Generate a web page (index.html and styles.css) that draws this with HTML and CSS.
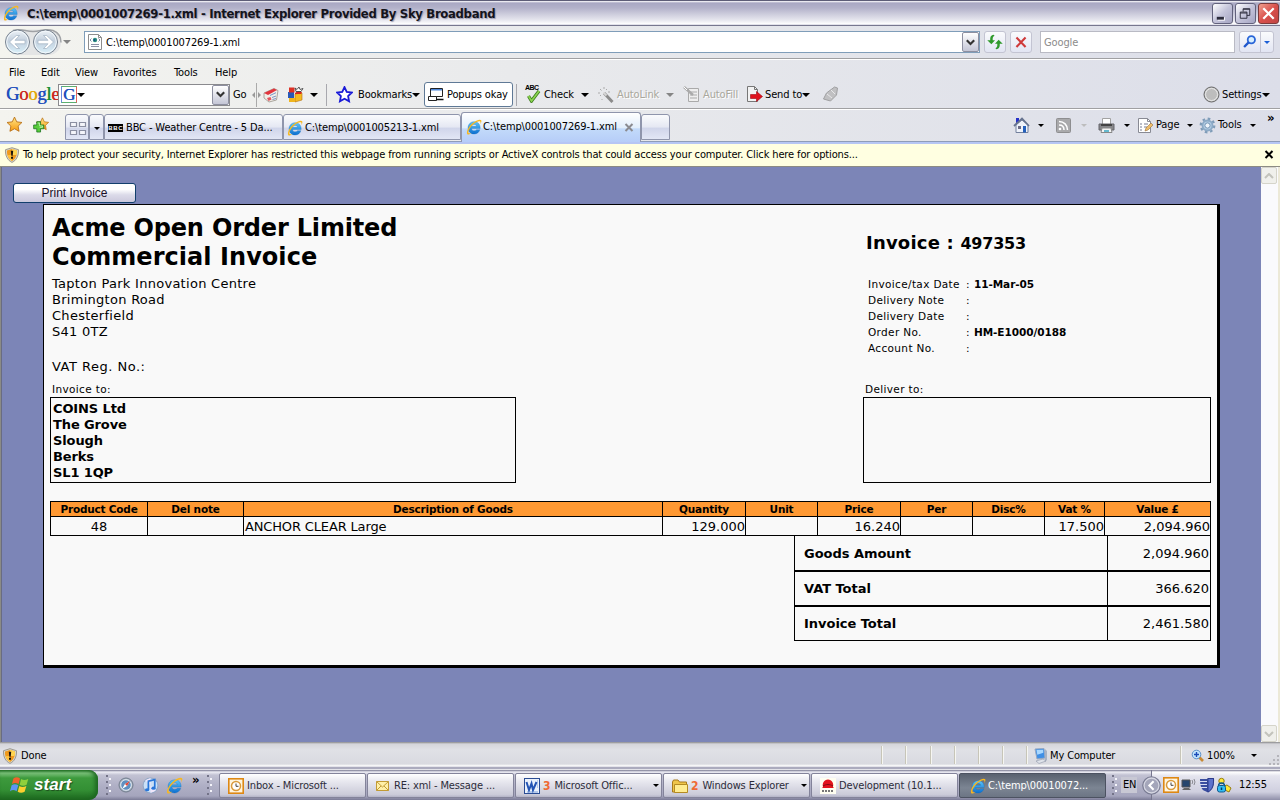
FILE: index.html
```html
<!DOCTYPE html>
<html lang="en">
<head>
<meta charset="utf-8">
<title>C:\temp\0001007269-1.xml</title>
<link rel="stylesheet" href="styles.css">
</head>
<body>
<svg class="defs" width="0" height="0">
  <defs>
    <linearGradient id="ieBlue" x1="0" y1="0" x2="0" y2="1"><stop offset="0" stop-color="#5cc4f8"/><stop offset="1" stop-color="#0c6fd0"/></linearGradient>
    <linearGradient id="orb" x1="0" y1="0" x2="0" y2="1"><stop offset="0" stop-color="#eef3f8"/><stop offset=".45" stop-color="#c3cfdd"/><stop offset="1" stop-color="#d9f1fb"/></linearGradient>
    <linearGradient id="goldStar" x1="0" y1="0" x2="0" y2="1"><stop offset="0" stop-color="#ffe98a"/><stop offset="1" stop-color="#f79a10"/></linearGradient>
    <symbol id="ie" viewBox="0 0 16 16">
      <path d="M14.200 9.500H5.500c.1 1.500 1.200 2.300 2.700 2.300 1.100 0 1.900-.4 2.300-1.100h3.400c-.9 2.700-3 4.300-5.700 4.300C4.600 15 2 12.400 2 8.900s2.500-6.200 6.200-6.200 6.200 2.600 6 6.800zM5.600 7.300h5c-.2-1.200-1.100-1.800-2.500-1.800S5.800 6.100 5.600 7.300z" fill="url(#ieBlue)" stroke="#0d68b8" stroke-width=".3"/>
      <path d="M1.300 15.200C0 13.700 2 8.300 6.100 4.600 10.300 1 14.300-.1 15.200 1.300c.5.900 0 2.400-1 4 .4-1.300.5-2.300 0-2.700-1.100-.8-4.400.5-7.600 3.400-3.500 3.400-4.900 7.200-3.900 8.100.6.500 1.900.2 3.300-.7-1.900 1.700-3.800 2.800-4.700 1.800z" fill="#f8b81f"/>
    </symbol>
    <symbol id="shield" viewBox="0 0 16 16">
      <path d="M8 .7l6.500 2C15 9 12 13.700 8 15.400 4 13.700 1 9 1.500 2.700z" fill="#d9d5c8" stroke="#8d897f" stroke-width=".8"/>
      <path d="M8 2l5 1.500c.4 4.700-1.800 8.800-5 10.400C4.800 12.300 2.600 8.200 3 3.500z" fill="#f09a1c"/>
      <path d="M8 2l5 1.500c.2 2-.1 3.400-.5 4.500H8z" fill="#ffd552"/><path d="M8 8H3.400c.8 3 2.500 5 4.600 5.900z" fill="#ffc23d"/>
      <path d="M6.800 3.800h2.400l-.5 5H7.300zM7 9.800h2v2H7z" fill="#1b130c"/>
    </symbol>
    <symbol id="star" viewBox="0 0 16 16"><path d="M8 1l2.100 4.500 4.900.6-3.600 3.400.9 4.900L8 12l-4.300 2.400.9-4.900L1 6.100l4.900-.6z"/></symbol>
    <symbol id="clock" viewBox="0 0 16 16"><rect x=".8" y=".8" width="14.400" height="14.400" fill="#fff5df" stroke="#dd8814" stroke-width="1.600"/><circle cx="8" cy="8" r="4.500" fill="#fff" stroke="#d99a3c" stroke-width="1.500"/><path d="M8 5.500V8.300h2.500" fill="none" stroke="#46423c"/></symbol>
  </defs>
</svg>

<header class="titlebar">
  <svg class="i16"><use href="#ie"/></svg>
  <h1 class="title">C:\temp\0001007269-1.xml - Internet Explorer Provided By Sky Broadband</h1>
  <div class="winbtns">
    <span class="winbtn"><svg viewBox="0 0 20 20"><path d="M5 14h7.500v3.500H5z" fill="#fff"/><path d="M4 13.500h7.500v3H4z" fill="#2c2c3c"/></svg></span>
    <span class="winbtn"><svg viewBox="0 0 20 20"><path d="M7.500 8V5h7v7h-3M4.500 8.500h7v6.500h-7zM4.500 9.500h7M7.500 5.500h7" fill="none" stroke="#2c2c3c"/></svg></span>
    <span class="winbtn close"><svg viewBox="0 0 20 20"><path d="M4.500 4.500l11 11M15.500 4.500l-11 11" stroke="#fff" stroke-width="2.400"/></svg></span>
  </div>
</header>

<div class="chrome">
<div class="nav">
  <svg class="arrows" viewBox="0 0 58 30">
    <path d="M13 2.500h31c9 0 13 5 13 12.500S52 28 44 28H13z" fill="#e4e5e6"/>
    <path d="M9 3.500c9-2.500 12 1 20 1s11-3.500 20-1c5 2 8 6 8 12" fill="none" stroke="#a0a2a6" stroke-width="1.400"/>
    <circle cx="13.500" cy="15" r="12" fill="url(#orb)" stroke="#77818e"/><circle cx="13.500" cy="15" r="10.800" fill="none" stroke="#f3f8fc"/>
    <circle cx="41.500" cy="15" r="12" fill="url(#orb)" stroke="#77818e"/><circle cx="41.500" cy="15" r="10.800" fill="none" stroke="#f3f8fc"/>
    <path d="M5.500 15l6.800-6.500h3.200L11 13.300h10v3.500H11l4.500 4.700h-3.200z" fill="#fff" stroke="#9fb0c1" stroke-width=".7"/>
    <path d="M49.500 15l-6.800-6.500h-3.200l4.500 4.800H34v3.500h10l-4.500 4.700h3.200z" fill="#fff" stroke="#9fb0c1" stroke-width=".7"/>
  </svg>
  <i class="dd grey"></i>
  <div class="address">
    <svg class="pageico" viewBox="0 0 16 16"><path d="M1.500.5h10l3 3v12h-13z" fill="#fff" stroke="#8d8d8d"/><path d="M11.500.5v3h3" fill="none" stroke="#8d8d8d"/><circle cx="8" cy="6" r="2.200" fill="#2f8f7c"/><circle cx="7.500" cy="6" r="1" fill="#124a8c"/><path d="M4.500 4.500L3 6l1.500 1.500M11.500 4.500L13 6l-1.500 1.500M4 10.500h8M4 12.500h8" fill="none" stroke="#8a8fa4"/></svg>
    <span>C:\temp\0001007269-1.xml</span>
    <b class="combo"><svg viewBox="0 0 8 6"><path d="M.7 1L4 4.300 7.300 1" fill="none" stroke="#333" stroke-width="1.900"/></svg></b>
  </div>
  <span class="navbtn"><svg viewBox="0 0 22 22"><path d="M9.500 3C6 3.500 5.600 6 5.800 9H2.500L7 13.500 11 9H8.500C8.300 6.500 8.500 5 10.500 4z" fill="#2f9a2c"/><path d="M12.500 19c3.500-.5 3.900-3 3.700-6h3.300L15 8.500 11 13h2.500c.2 2.500 0 4-2 5z" fill="#2f9a2c"/></svg></span>
  <span class="navbtn"><svg viewBox="0 0 22 22"><path d="M6 6l10 10.500M16 6L6 16.500" stroke="#cf3a3a" stroke-width="2.300"/></svg></span>
  <div class="search">Google</div>
  <span class="navbtn mag"><svg viewBox="0 0 22 22"><circle cx="12.500" cy="8.500" r="4" fill="#d7efff" stroke="#2a66d8" stroke-width="2"/><path d="M9.500 11.500l-5 5" stroke="#2058cc" stroke-width="2.600"/></svg><em><i class="dd blue"></i></em></span>
</div>

<nav class="menu"><span>File</span><span>Edit</span><span>View</span><span>Favorites</span><span>Tools</span><span>Help</span></nav>

<div class="gbar">
  <span class="glogo"><b class="gb">G</b><b class="gr">o</b><b class="gy">o</b><b class="gb">g</b><b class="gg">l</b><b class="gr">e</b></span>
  <div class="ginput"><span class="gbox">G</span><i class="dd"></i><b class="combo"><svg viewBox="0 0 8 6"><path d="M.7 1L4 4.300 7.300 1" fill="none" stroke="#333" stroke-width="1.900"/></svg></b></div>
  <span>Go</span>
  <svg width="9" height="24" viewBox="0 0 9 24"><path d="M4.500 0v24" stroke="#aaa"/><path d="M0 12l3-3v6zM9 12L6 9v6z" fill="#999"/></svg>
  <svg class="i16" viewBox="0 0 16 16"><path d="M1 6l10-4.500 4 2L13.500 13 6 15l-5-4z" fill="#f1eee8" stroke="#99938a" stroke-width=".8"/><path d="M1 6l10-4.500 3 1.500-9 5z" fill="#e2343d"/><path d="M4 11l3.500-1 1 2.500L5.500 14z" fill="#e2545d"/><path d="M7 8.500l6-2.800M9 10.500l4-1.500M9.500 12.500l3.500-1" stroke="#7b95c8"/></svg>
  <svg class="i17" viewBox="0 0 17 17"><path d="M1 6h6v6H1z" fill="#2858b7"/><path d="M8 8l7-1v7l-7 2z" fill="#f6ba20" stroke="#b16f12" stroke-width=".6"/><path d="M2 12h6v4H2z" fill="#efb51e"/><path d="M2 1.500h5.500v5H2z" fill="#dd3024"/><path d="M8 7l3-2 4 1-1 2H8z" fill="#d7261e"/><path d="M8 2l2 1.500L12 1l1 2.500 3-1-2 3H9z" fill="#fff" stroke="#333" stroke-width=".8"/></svg>
  <i class="dd"></i>
  <i class="sep"></i>
  <svg class="i17" viewBox="0 0 16 16" fill="#fff" stroke="#1a1ad8" stroke-width="1.700"><use href="#star"/></svg>
  <span class="lbl">Bookmarks<i class="dd"></i></span>
  <span class="popbtn"><svg class="i16" viewBox="0 0 16 16"><path d="M2.500 1.500h12v8h-12z" fill="#fff" stroke="#222"/><path d="M3 2h11v1.500H3z" fill="#4d86d8"/><path d="M.5 9.500h8v4h-8z" fill="#fff" stroke="#222"/><path d="M8 12.500h7.500" stroke="#111" stroke-width="1.500"/></svg>Popups okay</span>
  <i class="sep"></i>
  <span class="abc"><small>ABC</small><svg viewBox="0 0 14 13"><path d="M2 6l3 5L12.500 1" fill="none" stroke="#3f7c20" stroke-width="3.300"/><path d="M2 6l3 5L12.500 1" fill="none" stroke="#8bd650" stroke-width="1.600"/></svg></span>
  <span>Check</span><i class="dd"></i>
  <svg class="i16" viewBox="0 0 16 16"><path d="M6 6l8.500 9" stroke="#8b8b8b" stroke-width="3"/><path d="M5.500 5.500l3 3" stroke="#d7d7d7" stroke-width="2"/><path d="M2 2l1.500 1.500M6 0v2M9 2L8 3M0 6h2M2 9l1-1M11 4v2M4 12v1" stroke="#aaa"/></svg>
  <span class="off">AutoLink</span><i class="dd grey"></i>
  <svg class="i17" viewBox="0 0 17 17"><path d="M5.500 2.500h10v13h-10z" fill="#eee" stroke="#aaa"/><path d="M7 6h7M7 9h7M7 12h7" stroke="#aaa"/><path d="M1 1l9 8" stroke="#aaa" stroke-width="2.500"/><path d="M1 1l3 3" stroke="#fff"/></svg>
  <span class="off">AutoFill</span>
  <svg class="i17" viewBox="0 0 17 17"><path d="M1.500.5h7l3 3v12h-10z" fill="#f2f2f2" stroke="#777"/><path d="M8.500.5v3h3" fill="none" stroke="#777"/><path d="M4.500 8.500h6V5.500l6 5-6 5v-3h-6z" fill="#e0111c" stroke="#9c0910" stroke-width=".6"/></svg>
  <span class="lbl">Send to<i class="dd"></i></span>
  <svg class="i17" viewBox="0 0 17 17"><path d="M1.500 13l3-6 8-6 3 1-1 7-6 6z" fill="#c0c0c2" stroke="#a0a0a2"/><path d="M5 8l5 4M9 4l4 4" stroke="#e8e8ea"/></svg>
  <svg class="i17" viewBox="0 0 17 17"><circle cx="8.500" cy="8.500" r="7.500" fill="#c4c4c4" stroke="#676767"/><circle cx="8.500" cy="8.500" r="6" fill="#bdbdbd" stroke="#e8e8e8"/></svg>
  <span class="lbl">Settings<i class="dd"></i></span>
</div>

<div class="tabs">
  <svg class="fav" viewBox="0 0 16 16" fill="url(#goldStar)" stroke="#b66b12" stroke-width=".8"><use href="#star"/></svg>
  <svg class="fav" viewBox="0 0 18 16"><g fill="url(#goldStar)" stroke="#b66b12" stroke-width=".8"><use href="#star" x="2" width="16" height="15"/></g><path d="M4 5h4v3.500h3.500v4H8V16H4v-3.500H.7v-4H4z" fill="#58cc3c" stroke="#16701a" stroke-width=".8"/><path d="M5 6.500h2v3h3v1.500H7" fill="none" stroke="#d5f7c6" stroke-width=".8"/></svg>
  <div class="tab"><svg width="18" height="18" viewBox="0 0 18 18"><path d="M1.500 3.500h6v4h-6zM10.500 3.500h6v4h-6zM1.500 11.500h6v4h-6zM10.500 11.500h6v4h-6z" fill="#f4f5fa" stroke="#8b8fa2" stroke-width="1.200"/></svg></div>
  <div class="tab"><i class="dd sm"></i></div>
  <div class="tab"><span class="bbc"><b>B</b><b>B</b><b>C</b></span>BBC - Weather Centre - 5 Da...</div>
  <div class="tab t2"><svg class="i16"><use href="#ie"/></svg>C:\temp\0001005213-1.xml</div>
  <div class="tab on"><svg class="i16"><use href="#ie"/></svg>C:\temp\0001007269-1.xml<svg class="tx" viewBox="0 0 9 9"><path d="M1 1l7 7M8 1L1 8" stroke="#8b8b90" stroke-width="2"/></svg></div>
  <div class="tab"></div>
  <svg class="i17" viewBox="0 0 17 17"><path d="M3 1h3v5H3z" fill="#2530c8"/><path d="M3 8l6-5 6 5v7.500H3z" fill="#eef2fa" stroke="#73809c"/><path d="M1 9l8-7.500L16 9" fill="none" stroke="#66738f" stroke-width="1.800"/><path d="M10 9h3v6.500h-3z" fill="#2460bc"/><path d="M5 9h3v3H5z" fill="#6c6c85"/></svg>
  <i class="dd sm"></i>
  <svg class="i15" viewBox="0 0 15 15"><rect x=".5" y=".5" width="14" height="14" rx="1" fill="#a9a9ab" stroke="#8e8e90"/><circle cx="4" cy="11" r="1.300" fill="#fff"/><path d="M3 7c3 0 5 2 5 5M3 3.500c5 0 8.500 3.500 8.500 8.500" fill="none" stroke="#fff" stroke-width="1.500"/></svg>
  <i class="dd sm pale"></i>
  <svg class="i17" viewBox="0 0 17 17"><path d="M4.500 1.500h8v6h-8z" fill="#fff" stroke="#a2a2a2"/><path d="M1 7h15v6H1z" fill="#87878a" stroke="#65656a"/><path d="M3 7h11v2H3z" fill="#444"/><path d="M4 11h9l1 4.500H3z" fill="#f4f4f4" stroke="#888"/><path d="M6 13h5v2H6z" fill="#65b9cf"/></svg>
  <i class="dd sm"></i>
  <svg class="i17" viewBox="0 0 17 17"><path d="M1.500 1.500h9l3 3v11h-12z" fill="#fff" stroke="#888a94"/><path d="M10.500 1.500v3h3" fill="none" stroke="#888a94"/><path d="M3 7h2M7 7h4M3 10h2M7 10h3M3 13h2" stroke="#787d92"/><path d="M8 14l1-3 5-5 2 2-5 5z" fill="#efbd69" stroke="#98713a" stroke-width=".6"/></svg>
  <span>Page</span><i class="dd sm"></i>
  <svg class="i17" viewBox="0 0 17 17"><circle cx="8.500" cy="8.500" r="6.700" fill="none" stroke="#7f9cb8" stroke-width="2.400" stroke-dasharray="2.600 2.660"/><circle cx="8.500" cy="8.500" r="5" fill="#b2cce2" stroke="#8ba9c6" stroke-width="1.800"/><circle cx="8.500" cy="8.500" r="2.600" fill="#eef4fa" stroke="#7898b8"/></svg>
  <span>Tools</span><i class="dd sm"></i><span class="more">»</span>
</div>
</div>

<div class="infobar"><svg class="i16"><use href="#shield"/></svg><span>To help protect your security, Internet Explorer has restricted this webpage from running scripts or ActiveX controls that could access your computer. Click here for options...</span><svg class="ix" viewBox="0 0 9 9"><path d="M1 1l7 7M8 1L1 8" stroke="#000" stroke-width="2"/></svg></div>

<main class="view">
  <div class="page">
    <button class="print">Print Invoice</button>
    <article class="paper">
      <div class="top">
        <section class="seller">
          <h2><span>Acme Open Order Limited</span><br>Commercial Invoice</h2>
          <p>Tapton Park Innovation Centre<br>Brimington Road<br>Chesterfield<br>S41 0TZ</p>
          <p class="vat">VAT Reg. No.:</p>
        </section>
        <section class="info">
          <h3>Invoice : <span>497353</span></h3>
          <dl>
            <dt>Invoice/tax Date</dt><dd>: <b>11-Mar-05</b></dd>
            <dt>Delivery Note</dt><dd>:</dd>
            <dt>Delivery Date</dt><dd>:</dd>
            <dt>Order No.</dt><dd>: <b>HM-E1000/0188</b></dd>
            <dt>Account No.</dt><dd>:</dd>
          </dl>
        </section>
      </div>
      <div class="parties">
        <section><h4>Invoice to:</h4><div class="box">COINS Ltd<br>The Grove<br>Slough<br>Berks<br>SL1 1QP</div></section>
        <section><h4>Deliver to:</h4><div class="box"></div></section>
      </div>
      <div class="lines head"><span>Product Code</span><span>Del note</span><span>Description of Goods</span><span>Quantity</span><span>Unit</span><span>Price</span><span>Per</span><span>Disc%</span><span>Vat %</span><span>Value £</span></div>
      <div class="lines row"><span class="c">48</span><span></span><span class="l">ANCHOR CLEAR Large</span><span>129.000</span><span></span><span>16.240</span><span></span><span></span><span>17.500</span><span>2,094.960</span></div>
      <div class="totals">
        <div><b>Goods Amount</b><span>2,094.960</span></div>
        <div><b>VAT Total</b><span>366.620</span></div>
        <div><b>Invoice Total</b><span>2,461.580</span></div>
      </div>
    </article>
  </div>
  <div class="scroll">
    <span><svg viewBox="0 0 10 6"><path d="M1 5l4-4 4 4" fill="none" stroke="#c3c3bc" stroke-width="2"/></svg></span>
    <span><svg viewBox="0 0 10 6"><path d="M1 1l4 4 4-4" fill="none" stroke="#c3c3bc" stroke-width="2"/></svg></span>
  </div>
</main>

<footer class="status">
  <svg class="i16"><use href="#shield"/></svg><span>Done</span>
  <i class="v"></i><i class="v"></i><i class="v"></i><i class="v"></i><i class="v"></i><i class="v"></i><i class="v"></i>
  <svg class="i16" viewBox="0 0 16 16"><path d="M2 1l9-.5 1 9.500-8 1z" fill="#3f8fe5" stroke="#97a8c2"/><path d="M3.500 2l6.500-.3.300 3-6 2z" fill="#a9d8ff"/><path d="M12 1l2 2v9l-2 2z" fill="#aab3c3"/><path d="M3 13l7-2 3 2-7 2.500z" fill="#dfe3ea" stroke="#8d96a8" stroke-width=".6"/></svg>
  <span>My Computer</span>
  <i class="v"></i>
  <svg class="i13" viewBox="0 0 13 13"><path d="M8 8l4 4" stroke="#c88a34" stroke-width="2.600"/><circle cx="5.500" cy="5.500" r="4.300" fill="#c3e6fd" stroke="#5c90c8"/><path d="M5.500 3v5M3 5.500h5" stroke="#1a4bb8" stroke-width="1.400"/></svg>
  <span>100%</span><i class="dd sm"></i>
  <svg class="grip" viewBox="0 0 12 12"><path d="M9 1h2v2H9zM9 5h2v2H9zM9 9h2v2H9zM5 5h2v2H5zM5 9h2v2H5zM1 9h2v2H1z" fill="#b4b4ba"/></svg>
</footer>

<div class="taskbar">
  <div class="start"><svg viewBox="0 0 20 18"><path d="M4 3c2-1.500 4-1.500 6 0L8.700 8.200c-2-1.300-4-1.300-6 0z" fill="#f0622c"/><path d="M11 3.500c2 1.300 4 1.300 6.500 0L16 8.800c-2.300 1.300-4.300 1.200-6.300 0z" fill="#8fd03c"/><path d="M2.400 9.300c2-1.400 4-1.300 6 0l-1.500 5.300c-2-1.400-4-1.300-6 0z" fill="#5d95f3"/><path d="M9.400 9.800c2 1.300 4 1.300 6.400 0l-1.600 5.300c-2.300 1.300-4.300 1.200-6.300 0z" fill="#fccf2f"/></svg><b>start</b></div>
  <i class="dots"></i>
  <svg class="i16" viewBox="0 0 16 16"><circle cx="8" cy="8" r="7" fill="#a7b5c7" stroke="#727c8b"/><circle cx="8" cy="8" r="5.300" fill="#5f8fc0" stroke="#e7ecf1"/><path d="M12 4L9 9 4 12l3-5z" fill="#fff"/><path d="M12 4L9 9 7 7z" fill="#e34535"/></svg>
  <svg class="i17" viewBox="0 0 16 16"><circle cx="8" cy="8" r="7" fill="#cbe0f7" stroke="#91a7c6"/><path d="M3 3l5 5V1zM13 13L8 8v7z" fill="#f0e6fa"/><path d="M6 12V4l6-1.500V10" fill="none" stroke="#2976d9" stroke-width="1.600"/><ellipse cx="4.800" cy="12" rx="2" ry="1.500" fill="#2976d9"/><ellipse cx="10.800" cy="10.500" rx="2" ry="1.500" fill="#2976d9"/></svg>
  <svg class="i17" viewBox="0 0 16 16"><use href="#ie"/></svg>
  <span class="more">»</span>
  <i class="dots"></i>
  <div class="task"><svg class="i16"><use href="#clock"/></svg>Inbox - Microsoft ...</div>
  <div class="task mail"><svg viewBox="0 0 13 10"><path d="M.5.500h12v9H.5z" fill="#fff0a8" stroke="#c29b35"/><path d="M.5.500l6 5.500 6-5.500M.5 9.500L5 5M12.500 9.500L8 5" fill="none" stroke="#c29b35"/></svg>RE: xml - Message ...</div>
  <div class="task"><svg class="i16" viewBox="0 0 16 16"><rect x=".5" y=".5" width="15" height="15" fill="#eaf1fc" stroke="#2a4c94"/><path d="M13 3h1M13 5h1M13 7h1M13 9h1M3 14h11" stroke="#7fa0d8"/><path d="M2.500 4L5 12 7.500 5.500 9 12 12.500 4" fill="none" stroke="#2354b4" stroke-width="2"/></svg><b>3</b>Microsoft Offic...<i class="dd sm"></i></div>
  <div class="task"><svg class="i16" viewBox="0 0 16 16"><path d="M.5 4l1-2H6l1.500 2h7v10H.5z" fill="#efc54a" stroke="#a87a1b"/><path d="M2.500 6.500h13v8h-13z" fill="#ffec90" stroke="#b48a22"/></svg><b>2</b>Windows Explorer<i class="dd sm"></i></div>
  <div class="task"><svg class="i16" viewBox="0 0 16 16"><path d="M0 0h16v16H0z" fill="#fffef0"/><path d="M3 9c-1-4 1-7 5-7.500C12 2 14 5 13 9l1 1H2z" fill="#e3141c"/><path d="M3 8c3-2 7-2 10 0" stroke="#7f0c10" fill="none"/><path d="M2 13h12" stroke="#777" stroke-width="2" stroke-dasharray="2 1"/></svg>Development (10.1...</div>
  <div class="task cur"><svg class="i16"><use href="#ie"/></svg>C:\temp\00010072...</div>
  <i class="dots"></i>
  <span class="en">EN</span>
  <div class="tray">
    <svg class="orb" viewBox="0 0 18 18"><circle cx="9" cy="9" r="8.300" fill="#a4a6ba" stroke="#777990"/><circle cx="9" cy="9" r="7" fill="none" stroke="#d7d8e3"/><path d="M11 5L7 9l4 4" fill="none" stroke="#fff" stroke-width="2"/></svg>
    <svg class="i16"><use href="#clock"/></svg>
    <svg class="i16" viewBox="0 0 16 16"><path d="M1 3h8v7H1z" fill="#26466e" stroke="#555"/><path d="M3 11h5l2 2H1z" fill="#666"/><path d="M11 3q1.500 2 0 4M13 2q2 3 0 6" fill="none" stroke="#8a8a92"/></svg>
    <svg class="i16" viewBox="0 0 16 16"><path d="M1 2h7l1-1h6c.5 7-1 11.500-6 14.500L6 14C2.500 13 1 9 1 2z" fill="#3b4ea0"/><path d="M9 1.500h5.500c.3 7-1 11-5.500 13.500z" fill="#5c72cc" stroke="#2d3c8a"/><path d="M0 4.500h8M0 7.500h8M1 10.500h7" stroke="#d8dcf0"/></svg>
    <svg class="i16" viewBox="0 0 16 16"><circle cx="5.500" cy="4" r="2.700" fill="#ffe83a" stroke="#957d10"/><path d="M8 9l3-1 4 3-2 4-4-2z" fill="#ffe83a" stroke="#957d10"/><path d="M2.500 9c0-4 6-4 6 0" fill="none" stroke="#0d578d" stroke-width="1.400"/><rect x="1.500" y="8.500" width="8" height="6.500" rx="2" fill="#31bdf2" stroke="#0d578d"/><path d="M5.500 10.500v2.500" stroke="#063c66" stroke-width="1.500"/></svg>
    <span>12:55</span>
  </div>
</div>
</body>
</html>
```
FILE: styles.css
```css
* { box-sizing: border-box; }
html, body { margin: 0; height: 100%; }
body {
  width: 1280px; height: 800px; overflow: hidden;
  display: flex; flex-direction: column;
  font: 11px/16px "DejaVu Sans Condensed", "DejaVu Sans", sans-serif;
  font-stretch: condensed;
  letter-spacing: -.13px; color: #000; white-space: nowrap;
}
.defs { position: absolute; }
svg { display: block; flex: none; }
i, em { font-style: normal; }
.i16 { width: 16px; height: 16px; }
.i17 { width: 17px; height: 17px; }
.i15 { width: 15px; height: 15px; }
.i13 { width: 13px; height: 13px; }
.dd { display: block; flex: none; width: 0; height: 0; border: 4px solid transparent; border-top-color: #000; border-bottom: 0; }
.dd.sm { border-width: 3px 3px 0; }
.dd.grey { border-top-color: #858585; }
.dd.pale { border-top-color: #bdbdbd; }
.dd.blue { border-top-color: #1b5fd6; }

/* title bar */
.titlebar {
  height: 26px; display: flex; align-items: center; padding: 0 1px 0 3px;
  border-top: 1px solid #5d5d77; border-bottom: 1px solid #77778f;
  background: linear-gradient(#fff 0, #a9a8c3 2px, #b3b2ca 7px, #e6e6ee 19px, #fff 23px, #c5c5d6 24px);
}
.title { flex: 1; margin: 0 0 0 8px; padding-top: 1px; font-size: 13px; line-height: 20px; font-weight: bold; letter-spacing: -.34px; text-shadow: 1px 1px 1px #9a9ab0; color: #14141c; }
.winbtns { display: flex; gap: 2px; }
.winbtn { width: 21px; height: 21px; border: 1px solid #62627c; border-radius: 3px; background: linear-gradient(135deg, #fff, #c4c4da 50%, #a5a5c2); }
.winbtn svg { width: 19px; height: 19px; }
.close { border-color: #7c3a3a; background: linear-gradient(135deg, #f0a090, #d9504c 50%, #c04444); }

/* browser chrome */
.chrome { height: 118px; background: linear-gradient(90deg, #f4f4ef 0, #e9eaec 40%, #dcdee9 100%); }
.nav {
  height: 33px; display: grid; align-items: center; padding: 0 6px 0 4px;
  grid-template-columns: 59px 21px 900px 26px 30px 199px 35px;
  border-bottom: 1px solid #a0a0a2;
}
.arrows { width: 58px; height: 30px; }
.address { width: 896px; height: 22px; display: flex; align-items: center; border: 1px solid #7f9db9; background: #fff; padding-left: 2px; }
.address span { flex: 1; margin-left: 3px; padding-top: 1px; }
.pageico { width: 16px; height: 16px; }
.combo { width: 17px; height: 20px; border: 1px solid #8d8fa0; border-radius: 2px; background: linear-gradient(#fff, #c4c6d6); display: grid; place-items: center; }
.combo svg { width: 9px; height: 7px; }
.navbtn { width: 22px; height: 22px; border: 1px solid #c3c4d2; border-radius: 3px; background: linear-gradient(#fafbfd, #e2e5f3); display: flex; }
.navbtn svg { width: 20px; height: 20px; }
.mag { width: 35px; }
.mag em { flex: 1; display: grid; place-items: center; border-left: 1px solid #c3c4d2; }
.mag .dd { border-width: 3px 3px 0; }
.search { width: 195px; height: 22px; border: 1px solid #b9bac4; background: #fff; color: #8b8b8b; padding: 3px; line-height: 16px; }
.menu {
  height: 23px; display: grid; grid-template-columns: 32px 34px 38px 61px 41px 60px; align-items: center;
  padding: 3px 0 0 9px; border-top: 1px solid #fff;
}
.gbar {
  height: 27px; display: grid; align-items: center; padding: 0 0 3px 6px;
  grid-template-columns: 52px 175px 19px 11px 24px 23px 16px 10px 22px 66px 92px 9px 19px 37px 17px 19px 49px 17px 20px 43px 19px 57px 381px 19px 56px;
  border-bottom: 1px solid #a0a0a2;
}
.glogo { font: 18.500px/20px "Liberation Serif", serif; letter-spacing: -.2px; margin-top: -2px; }
.glogo b { font-weight: normal; text-shadow: .4px 0 0 currentColor; }
.gb { color: #2250bd; } .gr { color: #cb2a22; } .gy { color: #e3a80e; } .gg { color: #1b9137; }
.ginput { width: 172px; height: 22px; background: #fff; border: 1px solid #8a8a8e; display: flex; align-items: center; padding-left: 2px; }
.gbox { width: 16px; height: 17px; border: 1px solid #5cb070; border-left-color: #6b8be0; border-right-color: #e0655f; font: 17px/15px "Liberation Serif", serif; letter-spacing: 0; color: #2250bd; padding-left: 1px; text-shadow: .4px 0 0 currentColor; }
.ginput .combo { margin-left: auto; }
.sep { width: 1px; height: 22px; background: #a8a8ae; }
.lbl { display: flex; align-items: center; gap: 0; }
.off { color: #a9a79c; text-shadow: 1px 1px 0 #fff; }
.popbtn { width: 89px; height: 25px; display: flex; align-items: center; gap: 3px; padding-left: 3px; border: 1px solid #5f7996; border-radius: 3px; background: #fff; }
.abc { height: 22px; }
.abc small { display: block; font: bold 7px/7px "Liberation Sans", sans-serif; letter-spacing: -.5px; }
.abc svg { width: 15px; height: 13px; margin: -1px 0 0 1px; }

/* tab strip */
.tabs {
  height: 35px; display: grid; align-items: center; padding: 0 0 2px 6px;
  border-top: 1px solid #fff; border-bottom: 2px solid #b6c6f4;
  box-shadow: inset 0 -1px #8e9cb8;
  grid-template-columns: 27px 32px 24px 15px 179px 178px 180px 372px 25px 18px 25px 17px 26px 13px 19px 31px 12px 19px 32px 17px 11px;
}
.fav { width: 17px; height: 17px; margin-top: -2px; }
.tab {
  align-self: end; width: 100%; height: 26px; display: flex; align-items: center; padding: 2px 3px 0; gap: 2px; justify-self: start;
  border: 1px solid #8f95ac; border-radius: 3px 3px 0 0;
  background: linear-gradient(#fafbfd, #e5e8f3 50%, #d0d5ea 55%, #e2e6f5);
}
.tab:nth-child(8) { width: 29px; }
.tab:nth-child(4) { justify-content: center; }
.tab.on { height: 30px; margin-bottom: -2px; padding: 0 3px 1px 4px; background: linear-gradient(#fff, #e2eefb 50%, #c2dafa 55%, #b6cdf8); border-bottom: 0; }
.tab.on .i16 { margin-right: -1px; }
.tx { width: 10px; height: 9px; margin-left: 5px; }
.bbc { display: flex; gap: 0; margin-right: 1px; }
.bbc b { width: 5px; height: 8px; background: #000; color: #fff; font: bold 6px/8px "Liberation Sans", sans-serif; text-align: center; letter-spacing: 0; }
.more { font-weight: bold; font-size: 13px; align-self: start; }

/* information bar */
.infobar { height: 23px; display: flex; align-items: center; padding: 0 6px 1px 4px; background: #ffffe1; border-bottom: 1px solid #8c8b83; }
.infobar span { flex: 1; margin-left: 3px; padding-top: 1px; }
.ix { width: 10px; height: 9px; }

/* document view */
.view { height: 575px; display: flex; border-left: 1px solid #8b8b86; background: #7c85b7; }
.page { flex: 1; padding: 16px 0 0 11px; border-left: 1px solid #696c82; font: 13px/16px "DejaVu Sans", sans-serif; letter-spacing: 0; }
.print { display: block; width: 123px; height: 20px; border: 1px solid #123f6c; border-radius: 3px; background: linear-gradient(#fff 30%, #dcdbe9 60%, #cbc9dd); font: 12px/16px "Liberation Sans", sans-serif; color: #1a0f28; padding: 0; letter-spacing: 0; }
.paper { width: 1177px; height: 464px; margin: 1px 0 0 30px; padding: 9px 6px; border: solid #000; border-width: 1px 3px 3px 1px; background: #f9f9f9; }
.top { display: grid; grid-template-columns: 814px 1fr; height: 168px; }
.seller { padding-left: 2px; }
h2 { margin: 0; font-size: 24px; line-height: 29px; letter-spacing: .05px; }
h2 span { letter-spacing: -.18px; }
.seller p { margin: 4px 0 0; letter-spacing: .28px; }
.seller .vat { margin-top: 19px; letter-spacing: .5px; }
.info { padding-left: 2px; }
h3 { margin: 19px 0 22px; font-size: 18px; line-height: 20px; letter-spacing: .2px; }
h3 span { font-size: 16px; letter-spacing: -.2px; }
dl { margin: 0; padding-left: 2px; display: grid; grid-template-columns: 98px 1fr; font-size: 10.500px; line-height: 16px; }
dt { letter-spacing: .35px; }
dd { margin: 0; }
dd b { margin-left: 1px; letter-spacing: -.05px; }
.parties { display: grid; grid-template-columns: 466px 348px; justify-content: space-between; }
h4 { margin: 0 0 0 2px; font-weight: normal; font-size: 10.500px; line-height: 15px; letter-spacing: .35px; }
.box { height: 86px; border: 1px solid #000; padding: 3px 2px 0; font-weight: bold; letter-spacing: -.12px; }
.lines { display: grid; grid-template-columns: 97px 96px 419px 83px 72px 83px 72px 72px 60px 106px; width: 1161px; border-left: 1px solid #000; }
.lines span { border-right: 1px solid #000; border-bottom: 1px solid #000; text-align: center; }
.head { margin-top: 18px; border-top: 1px solid #000; background: #ff9933; font-weight: bold; font-size: 10.500px; line-height: 14px; letter-spacing: -.2px; }
.row { line-height: 18px; height: 19px; }
.row span { height: 19px; padding-top: 1px; text-align: right; }
.row .c { text-align: center; }
.row .l { text-align: left; padding-left: 1px; letter-spacing: -.15px; }
.totals { width: 417px; margin: 0 0 0 auto; border: solid #000; border-width: 0 1px; }
.totals div { display: grid; grid-template-columns: 1fr 103px; height: 35px; line-height: 34px; border-bottom: 2px solid #000; }
.totals div:first-child { height: 36px; line-height: 36px; }
.totals div:last-child { height: 34px; border-bottom-width: 1px; }
.totals b { padding-left: 9px; letter-spacing: -.03px; }
.totals span { border-left: 1px solid #000; text-align: right; padding-right: 1px; }
.lines span:first-child { margin-left: -1px; border-left: 1px solid #000; }
.scroll { width: 19px; border-right: 2px solid #ece9d8; background: #fafafd; display: flex; flex-direction: column; justify-content: space-between; }
.scroll span { width: 16px; height: 17px; display: grid; place-items: center; border: 1px solid #d5d4ca; border-radius: 2px; background: #f0f0ec; }
.scroll svg { width: 10px; height: 6px; }

/* status bar */
.status {
  height: 28px; display: grid; align-items: center; padding: 0 0 1px 2px;
  grid-template-columns: 19px 860px 24px 25px 24px 24px 24px 24px 7px 17px 130px 11px 16px 44px 17px 12px;
  background: linear-gradient(#8a8a8c 0, #d5d5da 2px, #e0e1e6 8px, #d9dae0 22px, #fff 24px, #8f8fa8 26px, #fff 28px);
}
.status > span { padding-top: 1px; }
.v { width: 2px; height: 18px; margin-top: -2px; background: #c7c5b8; border-right: 1px solid #f6f6f2; }
.grip { width: 12px; height: 12px; align-self: end; margin-bottom: 3px; }

/* taskbar */
.taskbar {
  height: 30px; display: grid; align-items: center;
  grid-template-columns: 106px 12px 24px 24px 26px 15px 12px 148px 148px 148px 148px 148px 153px 10px 29px 129px;
  background: linear-gradient(#77778f 0, #ededf4 2px, #c2c2d3 5px, #b0b0c6 50%, #a5a5bd 26px, #7b7b96 30px);
}
.start { width: 98px; height: 30px; display: flex; align-items: center; border-radius: 0 9px 9px 0; background: linear-gradient(#2a7a2c, #7cc27b 3px, #3d9a3d 8px, #338f34 20px, #1c661e); box-shadow: inset -3px 0 4px #1d6720; }
.start svg { width: 22px; height: 20px; margin-left: 9px; }
.start b { font: italic bold 17px/26px "Liberation Sans", sans-serif; color: #fff; text-shadow: 1px 1px 1px #1d4d1d; margin-left: 3px; letter-spacing: .1px; }
.dots { width: 6px; height: 20px; background: radial-gradient(circle at 1px 1px, #737388 1px, transparent 1.300px) 0 0 / 6px 6px, radial-gradient(circle at 4px 4px, #f4f4fa 1px, transparent 1.300px) 0 0 / 6px 6px; }
.taskbar .more { align-self: start; margin-top: 2px; }
.task { width: 147px; height: 25px; display: flex; align-items: center; gap: 3px; padding: 1px 4px 0 8px; color: #2c2c3a; border: 1px solid #83839a; border-radius: 2px; background: linear-gradient(#fff, #e9e9f0 30%, #cacad8 90%, #b2b2c6); }
.task b { color: #ef6a35; font-size: 12px; margin-right: 1px; }
.task .dd { margin-left: auto; margin-right: -2px; }
.mail svg { width: 13px; height: 10px; margin-right: 2px; }
.cur { color: #fff; background: linear-gradient(#59616f, #7c8593 60%, #6c7584); border-color: #4c5261; padding-left: 10px; gap: 2px; }
.en { width: 16px; margin-left: -1px; padding-left: 2px; background: #c8c8d4; }
.tray { width: 129px; height: 30px; display: grid; align-items: center; grid-template-columns: 11px 18px 18px 17px 23px 42px; background: linear-gradient(#77778f 0, #fff 2px, #e4e4ee 6px, #cfcfdf 22px, #8f8fa9 30px); border-left: 1px solid #77778f; }
.orb { width: 19px; height: 19px; margin-left: -10px; }
```
